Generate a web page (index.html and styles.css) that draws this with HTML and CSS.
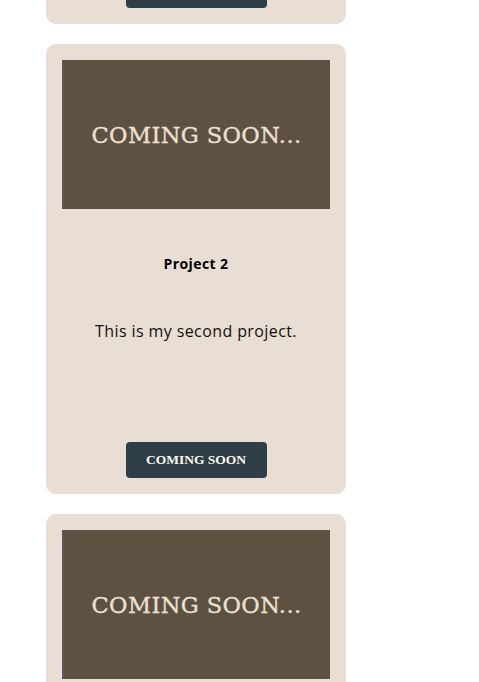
FILE: index.html
```html
<!DOCTYPE html>
<html lang="en">
<head>
<meta charset="utf-8">
<title>Projects</title>
<link rel="stylesheet" href="styles.css">
</head>
<body>
<main class="projects">
  <article class="card">
    <div class="thumb"><span>COMING SOON...</span></div>
    <h3 class="title">Project 1</h3>
    <p class="desc">This is my first project.</p>
    <a class="btn" href="#">COMING SOON</a>
  </article>
  <article class="card">
    <div class="thumb"><span>COMING SOON...</span></div>
    <h3 class="title">Project 2</h3>
    <p class="desc">This is my second project.</p>
    <a class="btn" href="#">COMING SOON</a>
  </article>
  <article class="card">
    <div class="thumb"><span>COMING SOON...</span></div>
    <h3 class="title">Project 3</h3>
    <p class="desc">This is my third project.</p>
    <a class="btn" href="#">COMING SOON</a>
  </article>
</main>
</body>
</html>
```
FILE: styles.css
```css
* { box-sizing: border-box; }
html, body { margin: 0; padding: 0; background: #ffffff; }
body { font-family: "Open Sans", "DejaVu Sans", sans-serif; color: #111; overflow: hidden; }

.projects {
  display: flex;
  flex-direction: column;
  gap: 20px;
  padding-left: 46px;
  margin-top: -426px;
}

.card {
  width: 300px;
  height: 450px;
  background: #e8ded4;
  border-radius: 10px;
  padding: 16px;
  display: flex;
  flex-direction: column;
  align-items: center;
}

.thumb {
  width: 268px;
  height: 149px;
  background: #5d5141;
  border-left: 1px solid #6a4f78;
  display: flex;
  align-items: center;
  justify-content: center;
  flex-shrink: 0;
}
.thumb span {
  font-family: "DejaVu Serif", serif;
  font-size: 22.5px;
  color: #ece1d4;
  letter-spacing: 0.4px;
  -webkit-text-stroke: 0.3px #ece1d4;
}

.title {
  margin: 46px 0 0;
  font-size: 14px;
  line-height: 18px;
  font-weight: 700;
  letter-spacing: 0.4px;
  color: #000;
}

.desc {
  margin: 48px 0 0;
  font-size: 16px;
  line-height: 20px;
  letter-spacing: 0.4px;
  color: #111;
}

.btn {
  margin-top: auto;
  width: 141px;
  height: 36px;
  background: #2d3e47;
  border-radius: 4px;
  display: flex;
  align-items: center;
  justify-content: center;
  color: #fff9ec;
  text-decoration: none;
  font-family: "Liberation Serif", serif;
  font-weight: 700;
  font-size: 13.5px;
}
```
